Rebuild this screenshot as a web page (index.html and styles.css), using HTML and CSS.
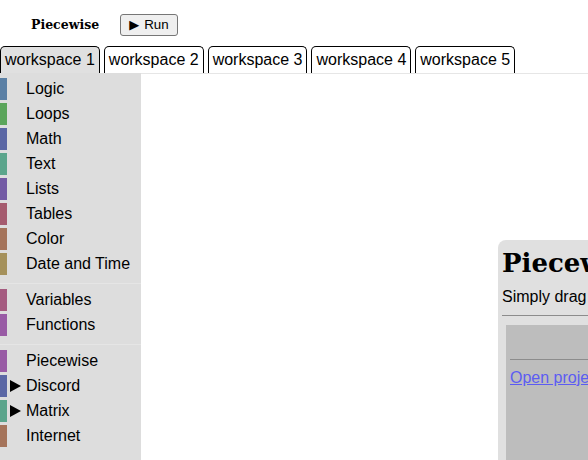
FILE: index.html
```html
<!DOCTYPE html>
<html>
<head>
<meta charset="utf-8">
<link rel="stylesheet" href="styles.css">
</head>
<body>
<header class="top">
  <span class="title">Piecewise</span>
  <button class="run"><span class="play">▶</span> Run</button>
</header>
<nav class="tabs">
  <button class="tab active">workspace 1</button>
  <button class="tab">workspace 2</button>
  <button class="tab">workspace 3</button>
  <button class="tab">workspace 4</button>
  <button class="tab">workspace 5</button>
</nav>
<main class="main">
  <aside class="toolbox">
    <div class="cat c-logic"><span class="label">Logic</span></div>
    <div class="cat c-loops"><span class="label">Loops</span></div>
    <div class="cat c-math"><span class="label">Math</span></div>
    <div class="cat c-text"><span class="label">Text</span></div>
    <div class="cat c-lists"><span class="label">Lists</span></div>
    <div class="cat c-tables"><span class="label">Tables</span></div>
    <div class="cat c-color"><span class="label">Color</span></div>
    <div class="cat c-date"><span class="label">Date and Time</span></div>
    <div class="sep"></div>
    <div class="cat c-vars"><span class="label">Variables</span></div>
    <div class="cat c-funcs"><span class="label">Functions</span></div>
    <div class="sep"></div>
    <div class="cat c-piece"><span class="label">Piecewise</span></div>
    <div class="cat c-discord"><span class="arrow"></span><span class="label">Discord</span></div>
    <div class="cat c-matrix"><span class="arrow"></span><span class="label">Matrix</span></div>
    <div class="cat c-internet"><span class="label">Internet</span></div>
  </aside>
  <section class="workspace">
    <div class="panel">
      <h1 class="panel-title">Piecewise</h1>
      <p class="panel-text">Simply drag blocks into the workspace</p>
      <hr class="rule">
      <div class="inner">
        <hr class="rule inner-rule">
        <a class="link" href="#">Open project</a>
      </div>
    </div>
  </section>
</main>
</body>
</html>
```

FILE: styles.css
```css
html, body {
  margin: 0;
  padding: 0;
  background: #fff;
  height: 100%;
  overflow: hidden;
}
body {
  font-family: "Liberation Sans", Arial, sans-serif;
  color: #000;
}
.top {
  display: flex;
  align-items: center;
  height: 46px;
  padding-left: 31px;
  gap: 21px;
  box-sizing: border-box;
  padding-top: 3px;
}
.title {
  font-family: "DejaVu Serif", serif;
  font-weight: bold;
  font-size: 12.5px;
}
.run {
  font-family: "Liberation Sans", Arial, sans-serif;
  font-size: 13.33px;
  height: 22px;
  padding: 0 8px;
  border: 1px solid #767676;
  border-radius: 3px;
  background: #efefef;
  color: #000;
  display: flex;
  align-items: center;
  gap: 5px;
}
.play {
  font-family: "DejaVu Sans", sans-serif;
  font-size: 13px;
}
.tabs {
  display: flex;
  gap: 4px;
  height: 27px;
}
.tab {
  font-family: "Liberation Sans", Arial, sans-serif;
  font-size: 16px;
  color: #000;
  background: #fff;
  border: 1px solid #000;
  border-bottom: none;
  border-radius: 5px 5px 0 0;
  padding: 0 4px;
  height: 27px;
  margin: 0;
}
.tab.active {
  background: #e0e0e0;
}
.main {
  display: flex;
  height: calc(100% - 73px);
}
.toolbox {
  width: 141px;
  flex: none;
  background: #ddd;
  padding-top: 5px;
  box-sizing: border-box;
}
.cat {
  height: 22px;
  margin-bottom: 3px;
  border-left: 7px solid #999;
  display: flex;
  align-items: center;
  position: relative;
  padding-left: 19px;
}
.label {
  font-size: 16px;
  line-height: 22px;
  white-space: nowrap;
}
.arrow {
  position: absolute;
  left: 3px;
  top: 5px;
  width: 0;
  height: 0;
  border-left: 11px solid #000;
  border-top: 6px solid transparent;
  border-bottom: 6px solid transparent;
}
.sep {
  border-bottom: 1px solid #e5e5e5;
  margin: 8px 0 5px;
}
.c-logic { border-left-color: #5b80a5; }
.c-loops { border-left-color: #5ba55b; }
.c-math { border-left-color: #5b67a5; }
.c-text { border-left-color: #5ba58c; }
.c-lists { border-left-color: #745ba5; }
.c-tables { border-left-color: #a55b6e; }
.c-color { border-left-color: #a5745b; }
.c-date { border-left-color: #a5915b; }
.c-vars { border-left-color: #a55b80; }
.c-funcs { border-left-color: #995ba5; }
.c-piece { border-left-color: #995ba5; }
.c-discord { border-left-color: #5b67a5; }
.c-matrix { border-left-color: #5ba58c; }
.c-internet { border-left-color: #a5745b; }
.workspace {
  flex: 1;
  position: relative;
  border-top: 1px solid #e6e6e6;
  overflow: hidden;
}
.panel {
  position: absolute;
  left: 357px;
  top: 166px;
  width: 320px;
  height: 260px;
  background: #e0e0e0;
  border-radius: 8px 0 0 0;
  padding: 8px 0 0 4px;
  box-sizing: border-box;
}
.panel-title {
  font-family: "DejaVu Serif", serif;
  font-weight: bold;
  font-size: 26px;
  margin: 0 0 10px;
  white-space: nowrap;
}
.panel-text {
  font-size: 16px;
  margin: 0 0 9px;
  white-space: nowrap;
}
.rule {
  border: none;
  border-top: 1px solid #8c8c8c;
  margin: 0;
}
.inner {
  margin: 9px 0 0 4px;
  background: #bdbdbd;
  padding: 34px 0 0 4px;
  height: 200px;
}
.link {
  display: block;
  margin-top: 9px;
  font-size: 16px;
  color: #5c5cf2;
  white-space: nowrap;
}
```
